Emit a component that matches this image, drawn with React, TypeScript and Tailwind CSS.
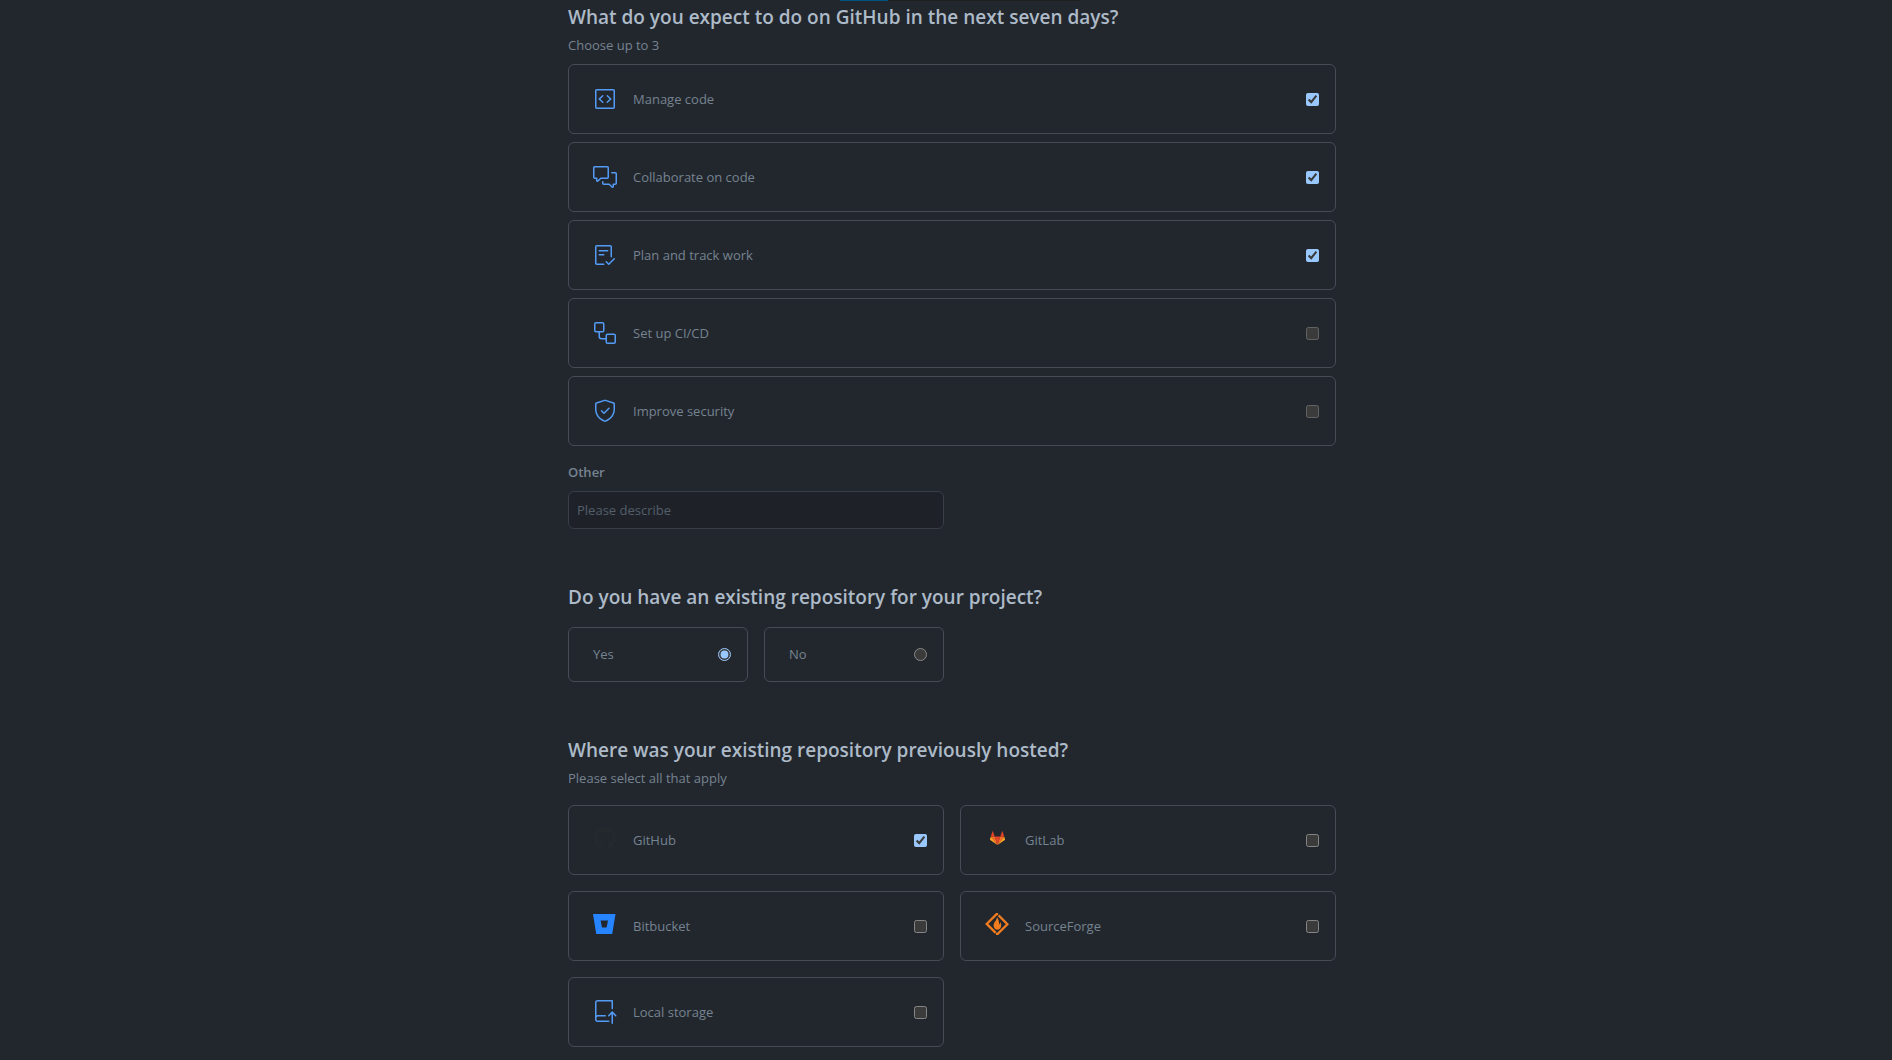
import type { ReactNode } from "react";
import {
  GoChecklist,
  GoCodeSquare,
  GoCommentDiscussion,
  GoRepoPush,
  GoShieldCheck,
  GoWorkflow,
} from "react-icons/go";
import { FaGithub } from "react-icons/fa";

function BitbucketLogo() {
  return (
    <svg viewBox="0 0 24 24" className="mb-1 h-6 w-6" aria-hidden="true">
      <path
        fill="#2684ff"
        fillRule="evenodd"
        d="M0 2h22.5L19.2 22H3.2L0 2Zm7.6 6.5L9 15.4h4.6L15 8.5H7.6Z"
      />
    </svg>
  );
}

function GitLabLogo() {
  return (
    <svg viewBox="0 0 24 24" className="mb-1 h-6 w-6" aria-hidden="true">
      <path fill="#e24329" d="M12.5 19 9.7 10.6h5.6L12.5 19Z" />
      <path fill="#fc6d26" d="M12.5 19 9.7 10.6H5.8L12.5 19Z" />
      <path fill="#fc6d26" d="m12.5 19 2.8-8.4h3.9L12.5 19Z" />
      <path fill="#fca326" d="m5.8 10.6-.8 2.6c-.1.3 0 .6.2.7L12.5 19 5.8 10.6Z" />
      <path fill="#fca326" d="m19.2 10.6.8 2.6c.1.3 0 .6-.2.7L12.5 19l6.7-8.4Z" />
      <path fill="#e24329" d="M5.8 10.6h3.9L8 5.4c-.1-.3-.5-.3-.6 0l-1.6 5.2Z" />
      <path fill="#e24329" d="M19.2 10.6h-3.9L17 5.4c.1-.3.5-.3.6 0l1.6 5.2Z" />
    </svg>
  );
}

function SourceForgeLogo() {
  return (
    <svg viewBox="0 0 24 24" className="mb-1 h-6 w-6" aria-hidden="true">
      <g fill="none" stroke="#f07c1f" strokeWidth="2.3">
        <path d="M13.2 2.2h-1.7l-9.8 9.7 9 9" />
        <path d="m13.6 3.4 8.8 8.8-9.7 9.6H11" />
      </g>
      <path
        fill="#f07c1f"
        d="M11.8 5.2c.4 3-3.2 4.600-3.200 8.400 0 2.500 1.700 4.200 3.800 4.200s3.800-1.700 3.800-4.200c0-1.800-.6-3-1.200-3.600.1 1.200-.2 2.200-.9 2.700.1-3.200-.6-6-2.300-7.500Z"
      />
    </svg>
  );
}

type Choice = {
  id: string;
  label: string;
  icon: ReactNode;
  checked?: boolean;
  disabled?: boolean;
};

const blue = "h-6 w-6 text-[#539bf5]";

const activities: Choice[] = [
  { id: "manage-code", label: "Manage code", icon: <GoCodeSquare className={blue} />, checked: true },
  { id: "collaborate", label: "Collaborate on code", icon: <GoCommentDiscussion className={blue} />, checked: true },
  { id: "plan", label: "Plan and track work", icon: <GoChecklist className={blue} />, checked: true },
  { id: "ci-cd", label: "Set up CI/CD", icon: <GoWorkflow className={blue} />, disabled: true },
  { id: "security", label: "Improve security", icon: <GoShieldCheck className={blue} />, disabled: true },
];

const hosts: Choice[] = [
  { id: "github", label: "GitHub", icon: <FaGithub className="mb-1 h-6 w-6 text-[#24292e]" />, checked: true },
  { id: "gitlab", label: "GitLab", icon: <GitLabLogo /> },
  { id: "bitbucket", label: "Bitbucket", icon: <BitbucketLogo /> },
  { id: "sourceforge", label: "SourceForge", icon: <SourceForgeLogo /> },
  { id: "local", label: "Local storage", icon: <GoRepoPush className={blue} /> },
];

function CheckCard({ choice }: { choice: Choice }) {
  return (
    <label
      htmlFor={choice.id}
      className="flex h-[70px] items-center rounded-md border border-[#444c56] pr-4 pl-6"
    >
      <span className="mr-4">{choice.icon}</span>
      <span className="flex-1 pt-px">{choice.label}</span>
      <input
        id={choice.id}
        type="checkbox"
        defaultChecked={choice.checked}
        disabled={choice.disabled}
        className="h-[13px] w-[13px]"
      />
    </label>
  );
}

function RadioCard({ id, label, checked }: { id: string; label: string; checked?: boolean }) {
  return (
    <label
      htmlFor={id}
      className="flex h-[55px] items-center justify-between rounded-md border border-[#444c56] pr-4 pl-6"
    >
      {label}
      <input id={id} type="radio" name="existing" defaultChecked={checked} className="h-[13px] w-[13px]" />
    </label>
  );
}

function Heading({ children }: { children: ReactNode }) {
  return <h2 className="text-[19px] leading-7 font-semibold text-[#adbac7]">{children}</h2>;
}

export default function App() {
  return (
    <main className="min-h-screen bg-[#22272e] pl-3 font-['Open_Sans','Noto_Sans',sans-serif] text-[13px] leading-[21px] text-[#768390] [color-scheme:dark]">
      <div className="mx-auto max-w-3xl pb-3">
        <div className="flex justify-center pl-4">
          <div className="flex h-px w-[241px] bg-[#1f1f1f]">
            <div className="w-1/5 bg-[#005380]" />
          </div>
        </div>

        <section className="pt-0.5">
          <Heading>What do you expect to do on GitHub in the next seven days?</Heading>
          <p className="mt-1 mb-2">Choose up to 3</p>
          <div className="flex flex-col gap-2">
            {activities.map((choice) => (
              <CheckCard key={choice.id} choice={choice} />
            ))}
          </div>
          <div className="mt-4 grid grid-cols-2 gap-x-4">
            <div>
              <label htmlFor="other" className="block font-semibold">
                Other
              </label>
              <input
                id="other"
                type="text"
                placeholder="Please describe"
                className="mt-2 block h-[38px] w-full rounded-md border border-[#373e47] bg-[#1e2228] px-2 placeholder:text-[#545d68]"
              />
            </div>
          </div>
        </section>

        <section className="mt-[54px]">
          <Heading>Do you have an existing repository for your project?</Heading>
          <div className="mt-4 grid grid-cols-4 gap-4">
            <RadioCard id="existing-yes" label="Yes" checked />
            <RadioCard id="existing-no" label="No" />
          </div>
        </section>

        <section className="mt-[54px]">
          <Heading>Where was your existing repository previously hosted?</Heading>
          <p className="mt-1 mb-4">Please select all that apply</p>
          <div className="grid grid-cols-2 gap-4">
            {hosts.map((choice) => (
              <CheckCard key={choice.id} choice={choice} />
            ))}
          </div>
        </section>
      </div>
    </main>
  );
}
